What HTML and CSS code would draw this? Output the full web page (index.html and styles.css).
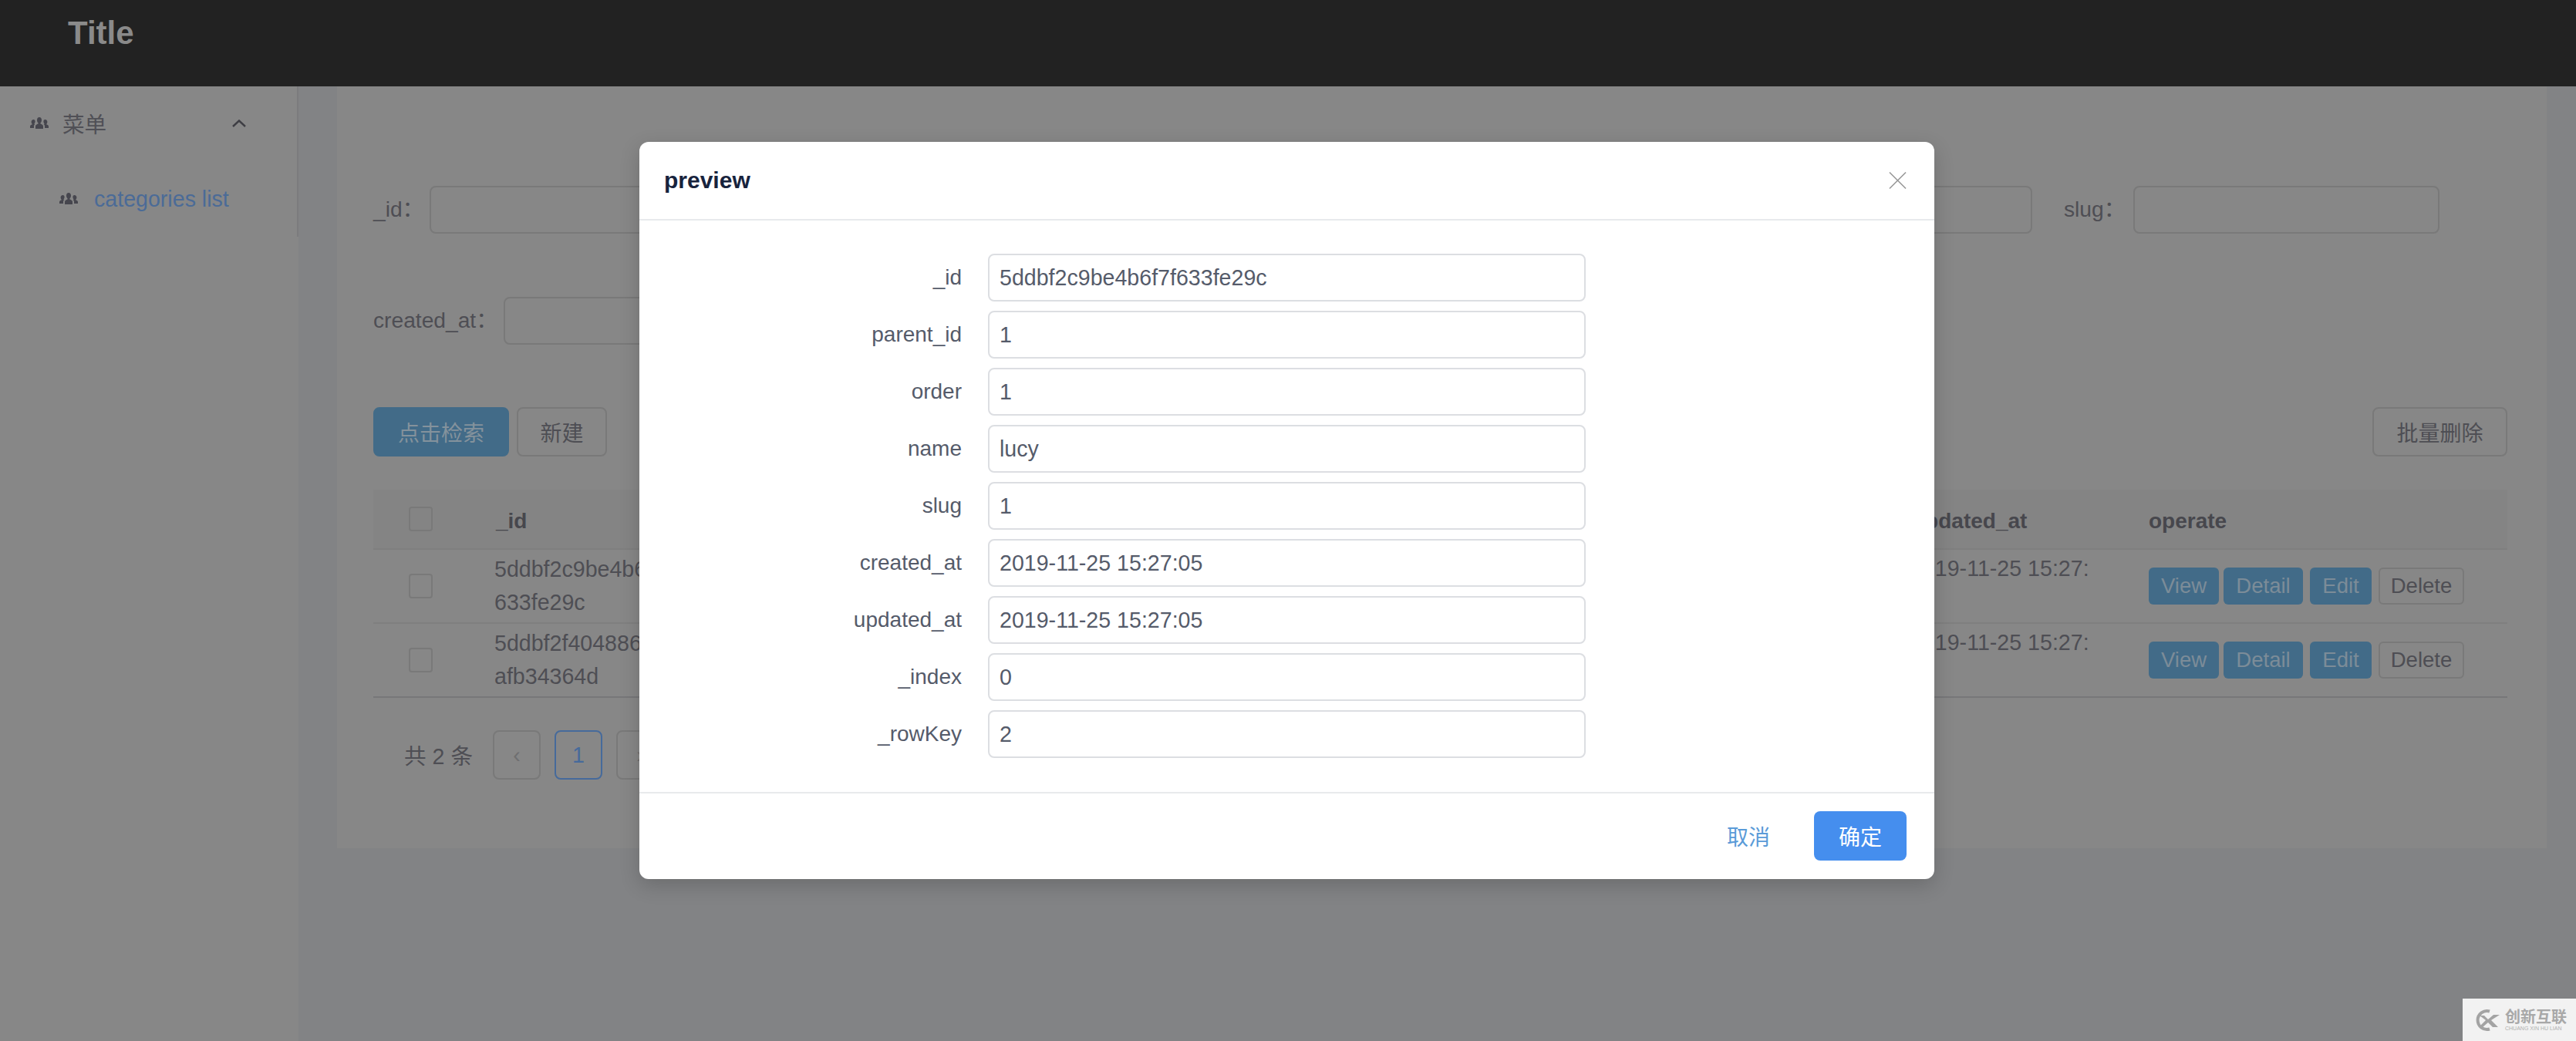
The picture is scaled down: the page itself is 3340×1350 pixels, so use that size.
FILE: index.html
```html
<!DOCTYPE html>
<html lang="zh">
<head>
<meta charset="utf-8">
<title>Title</title>
<link rel="stylesheet" href="styles.css">
</head>
<body>
<svg class="defs" width="0" height="0">
  <symbol id="people" viewBox="0 0 24 18">
    <path d="M12 1c1.900 0 3 1.600 3 3.700 0 1.600-.7 3-1.500 3.700-.3.300-.3.900.1 1.100 1.400.7 3.400 1.300 3.400 3.100V16H7v-3.400c0-1.800 2-2.400 3.400-3.100.4-.2.4-.8.1-1.100C9.700 7.700 9 6.300 9 4.700 9 2.600 10.100 1 12 1z"/>
    <path d="M4.500 4c1.300 0 2.100 1.100 2.100 2.600 0 1.100-.5 2.100-1 2.600-.2.2-.2.6.1.8l.6.3c-.9.500-1.300 1.200-1.300 2.300V15H0v-2.300c0-1.300 1.500-1.700 2.500-2.200.3-.2.3-.6.1-.8-.5-.6-1-1.600-1-2.700C1.600 5.100 3.200 4 4.500 4z"/>
    <path d="M19.500 4c-1.300 0-2.100 1.100-2.100 2.600 0 1.100.5 2.100 1 2.600.2.2.2.6-.1.8l-.6.3c.9.500 1.300 1.200 1.300 2.300V15H24v-2.300c0-1.300-1.500-1.700-2.500-2.200-.3-.2-.3-.6-.1-.8.5-.6 1-1.600 1-2.700C22.400 5.100 20.800 4 19.500 4z"/>
  </symbol>
</svg>

<header class="topbar"><span class="brand">Title</span></header>

<div class="shell">
  <aside class="sidebar">
    <nav class="menu">
      <div class="menu-head">
        <svg class="people"><use href="#people"/></svg>
        <span class="menu-title">菜单</span>
        <svg class="chevron" viewBox="0 0 18 10"><path d="M1 9l8-7.500L17 9"/></svg>
      </div>
      <div class="menu-item">
        <svg class="people"><use href="#people"/></svg>
        <span class="menu-link">categories list</span>
      </div>
    </nav>
  </aside>

  <main class="content">
    <section class="card">
      <form class="filters">
        <div class="filter-row">
          <label class="field"><span>_id：</span><input class="box" type="text"></label>
          <div class="field"><span></span><input class="box" type="text"></div>
          <div class="field"><span></span><input class="box" type="text"></div>
          <div class="field"><span></span><input class="box" type="text"></div>
          <label class="field"><span>slug：</span><input class="box" type="text"></label>
        </div>
        <div class="filter-row second">
          <label class="field"><span>created_at：</span><input class="box" type="text"></label>
        </div>
      </form>

      <div class="toolbar">
        <button class="btn primary search" type="button">点击检索</button>
        <button class="btn new" type="button">新建</button>
        <button class="btn bulk" type="button">批量删除</button>
      </div>

      <table class="grid">
        <colgroup>
          <col class="c-check"><col class="c-data"><col class="c-data"><col class="c-data"><col class="c-data"><col class="c-data"><col class="c-data"><col class="c-data"><col>
        </colgroup>
        <thead>
          <tr>
            <th><span class="check"></span></th>
            <th>_id</th><th></th><th></th><th></th><th></th><th></th><th>updated_at</th><th class="op-head">operate</th>
          </tr>
        </thead>
        <tbody>
          <tr>
            <td><span class="check"></span></td>
            <td class="shifted">5ddbf2c9be4b6f7f633fe29c</td><td></td><td></td><td></td><td></td><td></td><td class="shifted top">2019-11-25 15:27:</td>
            <td class="ops"><div class="ops-row"><button class="mini primary view" type="button">View</button><button class="mini primary detail" type="button">Detail</button><button class="mini primary edit" type="button">Edit</button><button class="mini plain" type="button">Delete</button></div></td>
          </tr>
          <tr>
            <td><span class="check"></span></td>
            <td class="shifted">5ddbf2f404886b7fafb34364d</td><td></td><td></td><td></td><td></td><td></td><td class="shifted top">2019-11-25 15:27:</td>
            <td class="ops"><div class="ops-row"><button class="mini primary view" type="button">View</button><button class="mini primary detail" type="button">Detail</button><button class="mini primary edit" type="button">Edit</button><button class="mini plain" type="button">Delete</button></div></td>
          </tr>
        </tbody>
      </table>

      <div class="pager">
        <span class="total">共 2 条</span>
        <span class="page arrow">‹</span>
        <span class="page current">1</span>
        <span class="page arrow">›</span>
      </div>
    </section>
  </main>
</div>

<div class="modal" role="dialog">
  <div class="modal-head">
    <span class="modal-title">preview</span>
    <svg class="close" viewBox="0 0 24 24"><path d="M1 1l22 22M23 1L1 23"/></svg>
  </div>
  <div class="modal-body">
    <div class="row"><span class="row-label">_id</span><input class="row-input" value="5ddbf2c9be4b6f7f633fe29c"></div>
    <div class="row"><span class="row-label">parent_id</span><input class="row-input" value="1"></div>
    <div class="row"><span class="row-label">order</span><input class="row-input" value="1"></div>
    <div class="row"><span class="row-label">name</span><input class="row-input" value="lucy"></div>
    <div class="row"><span class="row-label">slug</span><input class="row-input" value="1"></div>
    <div class="row"><span class="row-label">created_at</span><input class="row-input" value="2019-11-25 15:27:05"></div>
    <div class="row"><span class="row-label">updated_at</span><input class="row-input" value="2019-11-25 15:27:05"></div>
    <div class="row"><span class="row-label">_index</span><input class="row-input" value="0"></div>
    <div class="row"><span class="row-label">_rowKey</span><input class="row-input" value="2"></div>
  </div>
  <div class="modal-foot">
    <button class="cancel" type="button">取消</button>
    <button class="ok" type="button">确定</button>
  </div>
</div>

<div class="watermark">
  <svg class="wm-logo" viewBox="0 0 36 30">
    <path class="wm-ring" d="M22 3.500A12 12 0 1 0 22 26.500"/>
    <path class="wm-x" d="M9 9h6l5 5 7-6h8L24 15l9 9h-7l-6-6-7 6H8l9-9z"/>
  </svg>
  <div class="wm-text">
    <span class="wm-cn">创新互联</span>
    <span class="wm-en">CHUANG XIN HU LIAN</span>
  </div>
</div>
</body>
</html>
```
FILE: styles.css
```css
* { box-sizing: border-box; }
html, body { margin: 0; height: 100%; }
body {
  width: 3340px;
  height: 1350px;
  overflow: hidden;
  position: relative;
  background: #828385;
  color: #4e4e54;
  font-family: "Liberation Sans", "Noto Sans CJK SC", sans-serif;
  font-size: 28.600px;
}
.defs { position: absolute; }

.topbar {
  height: 112px;
  background: #222222;
  padding: 20px 0 0 88px;
}
.brand { font-size: 42px; font-weight: 700; line-height: 46px; color: #8a8a8a; display: block; }

.shell { display: flex; height: 1238px; }

.sidebar { width: 387px; flex: none; background: #878787; }
.menu { height: 195px; border-right: 2px solid #7b7b7d; }
.menu-head { display: flex; align-items: center; height: 96px; padding-left: 39px; }
.menu-title { margin-left: 18px; color: #505056; padding-bottom: 2px; }
.people { width: 24px; height: 18px; fill: #46464e; flex: none; }
.chevron { width: 18px; height: 10px; margin-left: 163px; fill: none; stroke: #3e3e44; stroke-width: 2.400; }
.menu-item { display: flex; align-items: center; height: 66px; padding-left: 77px; margin-top: 17px; }
.menu-link { margin-left: 21px; color: #4b6b97; }

.content { flex: 1; padding: 0 38px 0 50px; }
.card { background: #878787; height: 988px; padding: 129px 49px 0 47px; }

.filter-row {
  display: grid;
  width: 2679px;
  grid-template-columns: 470px 1fr 1fr 1fr 487px;
  column-gap: 41px;
}
.filter-row.second { margin-top: 82px; grid-template-columns: 566px; }
.field { display: flex; align-items: center; height: 62px; white-space: nowrap; font-size: 28.200px; }
.field span { flex: 1; padding-bottom: 8px; }
.box { width: 397px; height: 62px; flex: none; background: transparent; border: 2px solid #797979; border-radius: 8px; }

.toolbar { display: flex; margin-top: 81px; height: 64px; padding-right: 2px; }
.btn { height: 64px; border-radius: 8px; font-family: inherit; font-size: 28px; border: 2px solid #797979; background: transparent; color: #4e4e54; padding: 0; }
.btn.primary { background: #426b88; border-color: #426b88; color: #84929c; }
.search { width: 176px; }
.new { width: 117px; margin-left: 10px; }
.bulk { width: 175px; margin-left: auto; }

.grid { width: 2767px; table-layout: fixed; border-collapse: collapse; margin-top: 43px; }
.c-check { width: 125px; }
.c-data { width: 306px; }
.grid th { height: 77px; background: #848484; font-size: 28px; font-weight: 700; text-align: left; padding: 6px 34px 0; border-bottom: 2px solid #7f7f7f; color: #47474d; }
.grid td { height: 96px; padding: 0 34px; line-height: 43px; word-break: break-all; border-bottom: 2px solid #7f7f7f; color: #4e4e54; }
.grid td.shifted { padding-left: 32px; }
.grid td.top { vertical-align: top; padding-top: 3px; }
.grid tbody tr:last-child td { border-bottom-color: #777779; }
.grid th:first-child, .grid td:first-child { padding: 0 0 0 46px; }
.grid th.op-head, .grid td.ops { padding-left: 35px; padding-right: 0; }
.check { display: block; width: 31px; height: 32px; border: 2px solid #797979; border-radius: 4px; }
.ops-row { display: flex; align-items: center; }
.mini { height: 48px; font-family: inherit; font-size: 27.500px; border-radius: 6px; padding: 0; border: 0; flex: none; }
.mini.primary { background: #426b88; color: #7c8c98; }
.view { width: 91px; margin-right: 6px; }
.detail { width: 103px; margin-right: 9px; }
.edit { width: 80px; margin-right: 9px; }
.mini.plain { width: 111px; background: transparent; border: 2px solid #797979; color: #4e4e54; }

.pager { display: flex; align-items: center; margin-top: 42px; padding-left: 40px; }
.total { width: 115px; flex: none; padding-bottom: 2px; }
.page { width: 62px; height: 64px; border: 2px solid #797979; border-radius: 8px; margin-right: 18px; display: flex; align-items: center; justify-content: center; color: #6f6f71; }
.page.current { border-color: #466a9b; color: #466a9b; }

.modal {
  position: absolute;
  left: 829px;
  top: 184px;
  width: 1679px;
  height: 956px;
  background: #ffffff;
  border-radius: 12px;
  box-shadow: 0 8px 26px rgba(0, 0, 0, .18);
  display: flex;
  flex-direction: column;
}
.modal-head { height: 102px; flex: none; border-bottom: 2px solid #e8eaec; display: flex; align-items: center; justify-content: space-between; padding: 0 36px 0 32px; }
.modal-title { font-size: 30px; font-weight: 700; color: #17233d; }
.close { width: 23px; height: 24px; fill: none; stroke: #999999; stroke-width: 1.700; }
.modal-body { flex: 1; padding-top: 43px; display: flex; flex-direction: column; row-gap: 12px; }
.row { display: flex; align-items: center; height: 62px; }
.row-label { width: 418px; flex: none; text-align: right; color: #555b6a; font-size: 28px; }
.row-input { width: 775px; height: 62px; margin-left: 34px; font: inherit; color: #555b6a; padding: 0 13px; border: 2px solid #dcdee2; border-radius: 8px; background: #fff; }
.modal-foot { height: 113px; flex: none; border-top: 2px solid #e8eaec; display: flex; align-items: center; justify-content: flex-end; padding: 0 36px 2px 0; }
.cancel { border: 0; background: none; font-family: inherit; font-size: 28px; color: #5a9bd8; padding: 0; width: 120px; margin-right: 25px; }
.ok { width: 120px; height: 64px; border: 0; border-radius: 8px; background: #458eee; color: #fff; font-family: inherit; font-size: 28px; }

.watermark {
  position: absolute;
  right: 0;
  bottom: 0;
  width: 147px;
  height: 55px;
  background: #f2f2f2;
  display: flex;
  align-items: center;
  padding-left: 13px;
  column-gap: 6px;
}
.wm-logo { width: 36px; height: 30px; flex: none; }
.wm-ring { fill: none; stroke: #a3a3a3; stroke-width: 4; }
.wm-x { fill: #a3a3a3; }
.wm-text { display: flex; flex-direction: column; }
.wm-cn { font-size: 20px; line-height: 22px; font-weight: 700; color: #a8a8a8; white-space: nowrap; }
.wm-en { font-size: 7px; line-height: 8px; color: #b0b0b0; white-space: nowrap; }
```
